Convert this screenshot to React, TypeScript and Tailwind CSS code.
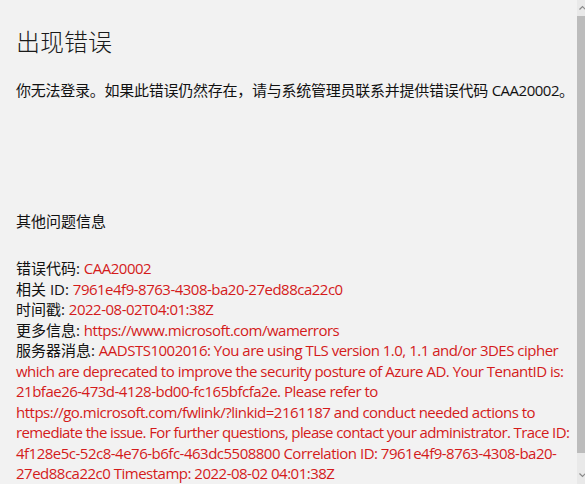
import React from "react";

const red = "text-[#d41b1b] tracking-[-0.5px]";

export default function App() {
  const font = {
    fontFamily: '"Open Sans", "Noto Sans CJK SC", sans-serif',
  };
  return (
    <div className="relative h-[484px] w-[585px] overflow-hidden bg-[#f2f2f2] text-[#111]" style={font}>
      <div className="pl-4 pt-[24px]">
        <h1 className="text-[24px] leading-[36px] font-light text-[#1a1a1a]">出现错误</h1>
        <p className="mt-[20px] text-[15px] leading-[20px] tracking-[-0.25px]">
          你无法登录。如果此错误仍然存在，请与系统管理员联系并提供错误代码 <span className="tracking-[-0.5px]">CAA20002</span>。
        </p>
        <p className="mt-[111px] text-[15px] leading-[20px]">其他问题信息</p>
        <div className="mt-[27px] text-[15px] leading-[20.5px]">
          <div>
            错误代码: <span className={red}>CAA20002</span>
          </div>
          <div>
            相关 ID: <span className={red}>7961e4f9-8763-4308-ba20-27ed88ca22c0</span>
          </div>
          <div>
            时间戳: <span className={red}>2022-08-02T04:01:38Z</span>
          </div>
          <div>
            更多信息: <span className={red}>https://www.microsoft.com/wamerrors</span>
          </div>
          <div>
            服务器消息:{" "}
            <span className={red}>
              AADSTS1002016: You are using TLS version 1.0, 1.1 and/or 3DES cipher which are deprecated to improve the security posture of Azure AD. Your TenantID is: 21bfae26-473d-4128-bd00-fc165bfcfa2e. Please refer to https://go.microsoft.com/fwlink/?linkid=2161187 and conduct needed actions to{" "}
              <span className="tracking-[-0.62px]">
                remediate the issue. For further questions, please contact your administrator. Trace ID:
              </span>{" "}
              4f128e5c-52c8-4e76-b6fc-463dc5508800 Correlation ID: 7961e4f9-8763-4308-ba20-27ed88ca22c0 Timestamp: 2022-08-02 04:01:38Z
            </span>
          </div>
        </div>
      </div>
      <div className="absolute right-0 top-0 flex h-full w-[8px] flex-col bg-[#e9e9e9]">
        <div className="relative h-[16px]">
          <svg className="absolute left-[2px] top-[4px]" width="8" height="8" viewBox="0 0 8 8">
            <path d="M0.5 5.5 L3.5 2.5 L6.5 5.5" fill="none" stroke="#8a8a8a" strokeWidth="1.2" />
          </svg>
        </div>
        <div className="h-[437px] bg-[#bcbcbc]" />
        <div className="relative flex-1">
          <svg className="absolute left-[2px] bottom-[5px]" width="8" height="8" viewBox="0 0 8 8">
            <path d="M0.5 2.5 L3.5 5.5 L6.5 2.5" fill="none" stroke="#8a8a8a" strokeWidth="1.2" />
          </svg>
        </div>
      </div>
    </div>
  );
}
